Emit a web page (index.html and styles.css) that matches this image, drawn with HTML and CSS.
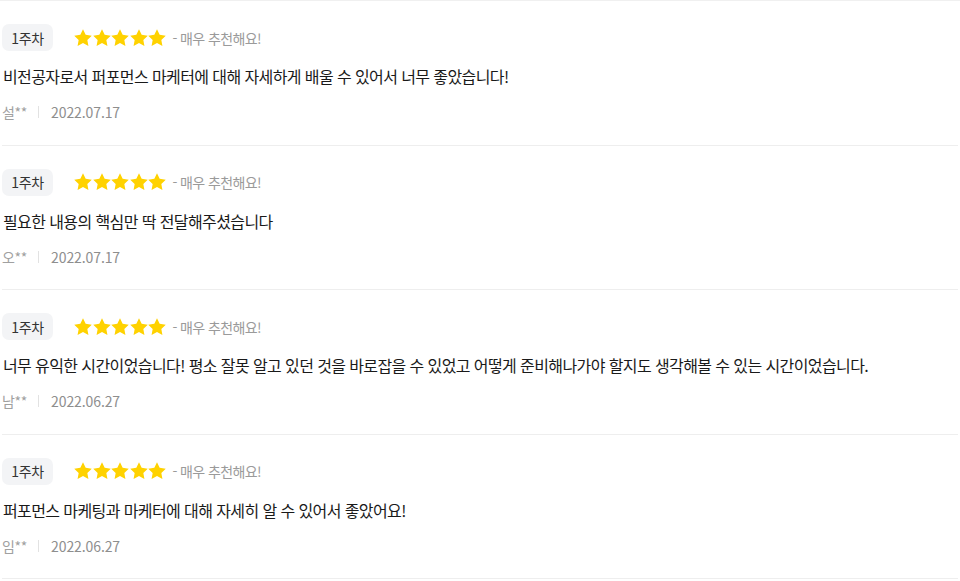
FILE: index.html
```html
<!DOCTYPE html>
<html lang="ko">
<head>
<meta charset="utf-8">
<link rel="stylesheet" href="styles.css">
</head>
<body>
<svg width="0" height="0" class="defs">
  <defs>
    <symbol id="star" viewBox="0 0 24 24"><path d="M12 1.5l3.2 6.7 7.3 1-5.3 5.1 1.3 7.3L12 18.1l-6.5 3.5 1.3-7.3-5.3-5.1 7.3-1z"/></symbol>
  </defs>
</svg>
<ul class="reviews">
  <li class="review">
    <div class="head"><span class="badge">1주차</span><span class="stars"><svg><use href="#star"/></svg><svg><use href="#star"/></svg><svg><use href="#star"/></svg><svg><use href="#star"/></svg><svg><use href="#star"/></svg></span><span class="rate">- 매우 추천해요!</span></div>
    <p class="text">비전공자로서 퍼포먼스 마케터에 대해 자세하게 배울 수 있어서 너무 좋았습니다!</p>
    <div class="meta"><span class="author">설**</span><span class="sep"></span><span class="date">2022.07.17</span></div>
  </li>
  <li class="review">
    <div class="head"><span class="badge">1주차</span><span class="stars"><svg><use href="#star"/></svg><svg><use href="#star"/></svg><svg><use href="#star"/></svg><svg><use href="#star"/></svg><svg><use href="#star"/></svg></span><span class="rate">- 매우 추천해요!</span></div>
    <p class="text">필요한 내용의 핵심만 딱 전달해주셨습니다</p>
    <div class="meta"><span class="author">오**</span><span class="sep"></span><span class="date">2022.07.17</span></div>
  </li>
  <li class="review">
    <div class="head"><span class="badge">1주차</span><span class="stars"><svg><use href="#star"/></svg><svg><use href="#star"/></svg><svg><use href="#star"/></svg><svg><use href="#star"/></svg><svg><use href="#star"/></svg></span><span class="rate">- 매우 추천해요!</span></div>
    <p class="text">너무 유익한 시간이었습니다! 평소 잘못 알고 있던 것을 바로잡을 수 있었고 어떻게 준비해나가야 할지도 생각해볼 수 있는 시간이었습니다.</p>
    <div class="meta"><span class="author">남**</span><span class="sep"></span><span class="date">2022.06.27</span></div>
  </li>
  <li class="review">
    <div class="head"><span class="badge">1주차</span><span class="stars"><svg><use href="#star"/></svg><svg><use href="#star"/></svg><svg><use href="#star"/></svg><svg><use href="#star"/></svg><svg><use href="#star"/></svg></span><span class="rate">- 매우 추천해요!</span></div>
    <p class="text">퍼포먼스 마케팅과 마케터에 대해 자세히 알 수 있어서 좋았어요!</p>
    <div class="meta"><span class="author">임**</span><span class="sep"></span><span class="date">2022.06.27</span></div>
  </li>
</ul>
</body>
</html>
```
FILE: styles.css
```css
html, body {
  margin: 0;
  padding: 0;
  background: #fff;
  font-family: "Noto Sans CJK KR", "Noto Sans", sans-serif;
  color: #1a1a1a;
}
.defs { position: absolute; }
.reviews {
  list-style: none;
  margin: 0;
  padding: 0 2px;
  border-top: 1px solid #f0f0f0;
}
.review {
  display: flex;
  flex-direction: column;
  padding: 23px 0 0 0;
  border-bottom: 1px solid #eeeeee;
  height: 144.5px;
  box-sizing: border-box;
}
.head {
  display: flex;
  align-items: center;
  height: 27px;
}
.badge {
  display: inline-flex;
  align-items: center;
  justify-content: center;
  height: 27px;
  width: 51px;
  border-radius: 7px;
  background: #f3f4f6;
  font-size: 14px;
  color: #333;
  letter-spacing: -0.4px;
}
.stars {
  display: flex;
  margin-left: 20px;
}
.stars svg {
  width: 20px;
  height: 20px;
  margin-right: -1.5px;
  fill: #ffd200;
}
.rate {
  margin-left: 7px;
  font-size: 14px;
  color: #9a9a9a;
  letter-spacing: -0.6px;
}
.text {
  margin: 13px 0 0 1px;
  font-size: 16px;
  line-height: 24px;
  color: #1a1a1a;
  letter-spacing: -0.6px;
}
.meta {
  display: flex;
  align-items: center;
  margin-top: 14px;
  height: 20px;
  font-size: 14px;
}
.author { color: #a0a0a0; letter-spacing: -0.3px; }
.sep {
  width: 1px;
  height: 12px;
  background: #e2e2e2;
  margin: 0 12px 0 11px;
}
.date { color: #8e8e8e; letter-spacing: -0.1px; }
```
